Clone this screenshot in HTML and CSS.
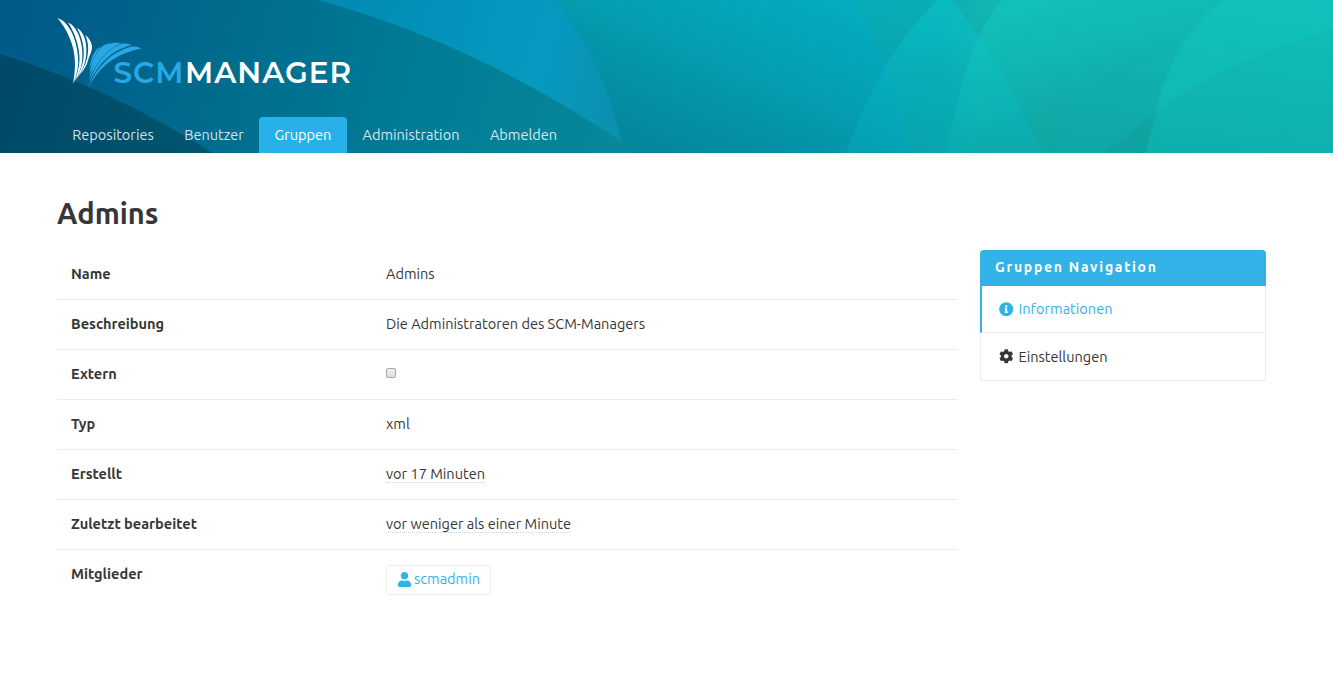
FILE: index.html
```html
<!DOCTYPE html>
<html lang="de">
<head>
<meta charset="utf-8">
<title>SCM-Manager</title>
<link rel="stylesheet" href="styles.css">
</head>
<body>
<header class="hero">
  <svg class="hero-bg" viewBox="0 0 1333 153" preserveAspectRatio="none" aria-hidden="true">
    <defs>
      <linearGradient id="base" gradientUnits="userSpaceOnUse" x1="860" y1="0" x2="1333" y2="0"><stop offset="0" stop-color="#08abb8"/><stop offset=".17" stop-color="#0aaeb5"/><stop offset=".25" stop-color="#12b5b0"/><stop offset="1" stop-color="#10bab4"/></linearGradient>
      <linearGradient id="g3" gradientUnits="userSpaceOnUse" x1="650" y1="170" x2="760" y2="-90"><stop offset="0" stop-color="#048299"/><stop offset=".5" stop-color="#049fb3"/><stop offset="1" stop-color="#05b3c8"/></linearGradient>
      <linearGradient id="g2" gradientUnits="userSpaceOnUse" x1="340" y1="0" x2="640" y2="90"><stop offset="0" stop-color="#008bb2"/><stop offset=".65" stop-color="#069ac1"/><stop offset="1" stop-color="#0b8fae"/></linearGradient>
      <linearGradient id="g1" gradientUnits="userSpaceOnUse" x1="30" y1="20" x2="600" y2="180"><stop offset="0" stop-color="#005b8a"/><stop offset=".3" stop-color="#006a8d"/><stop offset=".6" stop-color="#007995"/><stop offset="1" stop-color="#078799"/></linearGradient>
      <linearGradient id="g0" gradientUnits="userSpaceOnUse" x1="0" y1="80" x2="215" y2="150"><stop offset="0" stop-color="#004968"/><stop offset="1" stop-color="#00566f"/></linearGradient>
      <linearGradient id="gb" gradientUnits="userSpaceOnUse" x1="0" y1="0" x2="0" y2="153"><stop offset="0" stop-color="#08c1c5" stop-opacity=".75"/><stop offset=".5" stop-color="#06b8c2" stop-opacity=".4"/><stop offset="1" stop-color="#05b4c2" stop-opacity=".3"/></linearGradient>
      <linearGradient id="gc" gradientUnits="userSpaceOnUse" x1="985" y1="0" x2="1045" y2="110"><stop offset="0" stop-color="#0fcbc0" stop-opacity=".6"/><stop offset=".5" stop-color="#0fcbc0" stop-opacity=".32"/><stop offset="1" stop-color="#0fcbc0" stop-opacity=".05"/></linearGradient>
      <linearGradient id="shade" x1="0" y1="0" x2="0" y2="1"><stop offset="0" stop-color="#07606c" stop-opacity="0"/><stop offset="1" stop-color="#07606c" stop-opacity=".2"/></linearGradient>
    </defs>
    <rect width="1333" height="153" fill="url(#base)"/>
    <rect x="840" width="493" height="153" fill="url(#shade)"/>
    <path d="M0 0H854Q894 68 908 153H0Z" fill="url(#g3)"/>
    <path d="M938 0Q882 52 846 153H1042Q1008 73 952 0Z" fill="url(#gb)"/>
    <path d="M1002 0Q968 35 947 153H1146Q1170 35 1222 0Z" fill="url(#gc)"/>
    <path d="M1158 112Q1138 126 1104 153H1146Z" fill="#088e92" fill-opacity=".2"/>
    <path d="M1222 0Q1170 35 1146 153H1333V0Z" fill="#0fcdc2" fill-opacity=".25"/>
    <path d="M1222 0Q1175 32 1155 112Q1225 62 1333 29V0Z" fill="#0fcdc2" fill-opacity=".25"/>
    <path d="M0 0H555Q608 70 624 153H0Z" fill="url(#g2)"/>
    <path d="M0 0H318Q485 46 638 153H0Z" fill="url(#g1)"/>
    <path d="M0 54Q110 88 213 153H0Z" fill="url(#g0)"/>
  </svg>
  <div class="container hero-body">
    <svg class="logo" width="296" height="76" viewBox="56 15 296 76" role="img" aria-label="SCM-Manager">
      <g fill="#fff">
        <path d="M57.500 18C66 28 74.800 44 75 63C75 71 74 78 73 84C76 77 78 70 78.300 62C78 42 70 22 57.500 18Z"/>
        <path d="M68 22.500C75 33 79.800 47 79.500 61C79 69 76.500 76 74 82.500C78.500 75 81 69 82 62C84 47 79 27 68 22.500Z"/>
        <path d="M77 28C82 37 85 48 83.300 60C82 67 79 74 76 79.500C81 73 84 67 85.500 60C88 48 86 33 77 28Z"/>
        <path d="M85.300 35C88.500 42 89 50 87 58.500C85.500 65 82.500 70 79.500 75C84 70 87 65 88.500 59C90 54 92 52 92 46C91 41 89 38 85.300 35Z"/>
      </g>
      <g fill="#28a8e4">
        <path d="M141.500 48.500C137 46.500 134 46 130 47C109 53 96 69 88 88C98 70 112 54 141.500 48.500Z"/>
        <path d="M131.500 45C127 43.300 124 43 120 44.500C104 51 94.500 66 88.500 84C97.500 66 109 51 131.500 45Z"/>
        <path d="M121.500 43.300C117 42.300 113 42.500 110 44C99 51 92.500 64 89 79C96 64 105 50 121.500 43.300Z"/>
        <path d="M111.500 43.500C107 43.300 104 44.500 101.500 47C95 54 91 63 89.300 74C94.500 62 101 51 111.500 43.500Z"/>
        <path d="M101 46.500C96 48 90.500 57 89.500 69C92.500 60 96 53 101 46.500Z"/>
      </g>
      <text class="logo-text logo-scm" x="113.500" y="83" textLength="70">SCM</text>
      <text class="logo-text logo-manager" x="185" y="83" textLength="166">MANAGER</text>
    </svg>
    <nav class="tabs">
      <a class="tab t1">Repositories</a>
      <a class="tab t2">Benutzer</a>
      <a class="tab t3 active">Gruppen</a>
      <a class="tab t4">Administration</a>
      <a class="tab t5">Abmelden</a>
    </nav>
  </div>
</header>
<main class="container">
  <h1 class="title">Admins</h1>
  <div class="columns">
    <dl class="info">
      <div class="row"><dt>Name</dt><dd>Admins</dd></div>
      <div class="row"><dt>Beschreibung</dt><dd>Die Administratoren des SCM-Managers</dd></div>
      <div class="row"><dt>Extern</dt><dd><span class="checkbox"></span></dd></div>
      <div class="row"><dt>Typ</dt><dd>xml</dd></div>
      <div class="row"><dt>Erstellt</dt><dd><time class="date">vor 17 Minuten</time></dd></div>
      <div class="row"><dt>Zuletzt bearbeitet</dt><dd><time class="date">vor weniger als einer Minute</time></dd></div>
      <div class="row"><dt>Mitglieder</dt><dd><a class="member"><svg class="user-icon" viewBox="0 0 448 512"><path d="M224 256c70.700 0 128-57.300 128-128S294.700 0 224 0 96 57.300 96 128s57.300 128 128 128zm89.600 32h-16.700c-22.200 10.200-46.900 16-72.900 16s-50.600-5.800-72.900-16h-16.700C60.200 288 0 348.200 0 422.400V464c0 26.500 21.500 48 48 48h352c26.500 0 48-21.500 48-48v-41.600c0-74.200-60.200-134.400-134.400-134.400z"/></svg><span>scmadmin</span></a></dd></div>
    </dl>
    <aside class="menu">
      <h2 class="menu-label">Gruppen Navigation</h2>
      <a class="menu-item current"><svg class="menu-icon" viewBox="0 0 512 512"><path d="M256 8C119 8 8 119.100 8 256c0 137 111 248 248 248s248-111 248-248C504 119.100 393 8 256 8zm0 110c23.200 0 42 18.800 42 42s-18.800 42-42 42-42-18.800-42-42 18.800-42 42-42zm56 254c0 6.600-5.400 12-12 12h-88c-6.600 0-12-5.400-12-12v-24c0-6.600 5.400-12 12-12h12v-64h-12c-6.600 0-12-5.400-12-12v-24c0-6.600 5.400-12 12-12h64c6.600 0 12 5.400 12 12v100h12c6.600 0 12 5.400 12 12v24z"/></svg><span>Informationen</span></a>
      <a class="menu-item"><svg class="menu-icon" viewBox="0 0 512 512"><path d="M487.400 315.700l-42.600-24.600c4.300-23.200 4.300-47 0-70.200l42.600-24.600c4.900-2.800 7.100-8.600 5.500-14-11.100-35.600-30-67.800-54.700-94.600-3.800-4.100-10-5.100-14.800-2.300L380.800 110c-17.900-15.400-38.500-27.300-60.800-35.100V25.800c0-5.600-3.900-10.500-9.400-11.700-36.700-8.200-74.300-7.800-109.200 0-5.500 1.200-9.400 6.100-9.400 11.700V75c-22.200 7.900-42.800 19.800-60.800 35.100L88.700 85.500c-4.900-2.800-11-1.900-14.800 2.300-24.700 26.700-43.600 58.900-54.700 94.600-1.700 5.400.6 11.200 5.500 14L67.300 221c-4.300 23.200-4.300 47 0 70.200l-42.600 24.600c-4.900 2.800-7.100 8.600-5.500 14 11.100 35.600 30 67.800 54.700 94.600 3.800 4.100 10 5.100 14.800 2.300l42.600-24.600c17.900 15.400 38.500 27.300 60.800 35.100v49.200c0 5.600 3.900 10.500 9.400 11.700 36.700 8.200 74.300 7.800 109.200 0 5.500-1.200 9.400-6.100 9.400-11.700v-49.200c22.200-7.900 42.800-19.800 60.800-35.100l42.600 24.600c4.900 2.800 11 1.900 14.800-2.300 24.700-26.700 43.600-58.900 54.700-94.600 1.500-5.500-.7-11.300-5.600-14.100zM256 336c-44.100 0-80-35.900-80-80s35.900-80 80-80 80 35.900 80 80-35.900 80-80 80z"/></svg><span>Einstellungen</span></a>
    </aside>
  </div>
</main>
</body>
</html>
```
FILE: styles.css
```css
* { box-sizing: border-box; }
body {
  margin: 0;
  background: #fff;
  color: #363636;
  font: 14.56px/20px Ubuntu, "Noto Sans", "Open Sans", sans-serif;
}
.container { margin: 0 67px 0 57px; }
.hero { position: relative; height: 153px; overflow: hidden; }
.hero-bg { position: absolute; inset: 0; width: 100%; height: 100%; }
.hero-body {
  position: relative;
  height: 100%;
  padding-top: 15px;
  display: flex;
  flex-direction: column;
  justify-content: space-between;
}
.logo { display: block; margin-left: -1px; }
.logo-text { font-family: Montserrat, Lato, sans-serif; font-size: 29.500px; font-weight: 600; }
.logo-scm { fill: #28a8e4; }
.logo-manager { fill: #fff; }
.tabs { display: flex; }
.tab {
  height: 36px;
  display: flex;
  align-items: center;
  justify-content: center;
  color: rgba(255, 255, 255, .84);
  white-space: nowrap;
}
.t1 { width: 112px; }
.t2 { width: 90px; }
.t3 { width: 88px; }
.t4 { width: 128px; }
.t5 { width: 97px; }
.tab.active { background: #28b1e8; color: #fff; border-radius: 4px 4px 0 0; }
.title { margin: 42px 0 18px; font-size: 29.12px; line-height: 37px; font-weight: 700; }
.columns { display: flex; gap: 22px; align-items: flex-start; }
.info { width: 901px; margin: 0; }
.row { display: flex; height: 50px; padding: 14px 14px 0; border-bottom: 1px solid #ececec; }
.row:last-child { border-bottom: 0; }
.row dt { width: 315px; font-weight: 700; }
.row dd { margin: 0; }
.date { display: inline-block; height: 19px; border-bottom: 1px dotted #d4d4d4; }
.checkbox {
  display: block;
  width: 10px;
  height: 10px;
  margin-top: 4px;
  border: 1px solid #aaa;
  border-radius: 2px;
  background: linear-gradient(#eee, #ddd);
}
.member {
  display: flex;
  align-items: center;
  height: 30px;
  width: 105px;
  margin-top: 1px;
  padding: 0 0 2px 11px;
  gap: 3px;
  border: 1px solid #eee;
  border-radius: 4px;
  color: #33b2e8;
}
.user-icon { width: 13px; height: 15px; fill: currentColor; }
.menu { width: 286px; }
.menu-label {
  height: 36px;
  margin: 0;
  padding: 7px 15px;
  background: #33b2e8;
  border-radius: 4px 4px 0 0;
  color: #fff;
  font-size: 14px;
  line-height: 20px;
  letter-spacing: 1.720px;
}
.menu-item {
  display: flex;
  align-items: center;
  gap: 5px;
  height: 48px;
  padding-left: 18px;
  border: 1px solid #ececec;
  border-top: 0;
}
.menu-item.current { height: 47px; padding-left: 17px; border-left: 2px solid #33b2e8; color: #33b2e8; }
.menu-icon { width: 14.500px; height: 14.500px; fill: currentColor; }
```
